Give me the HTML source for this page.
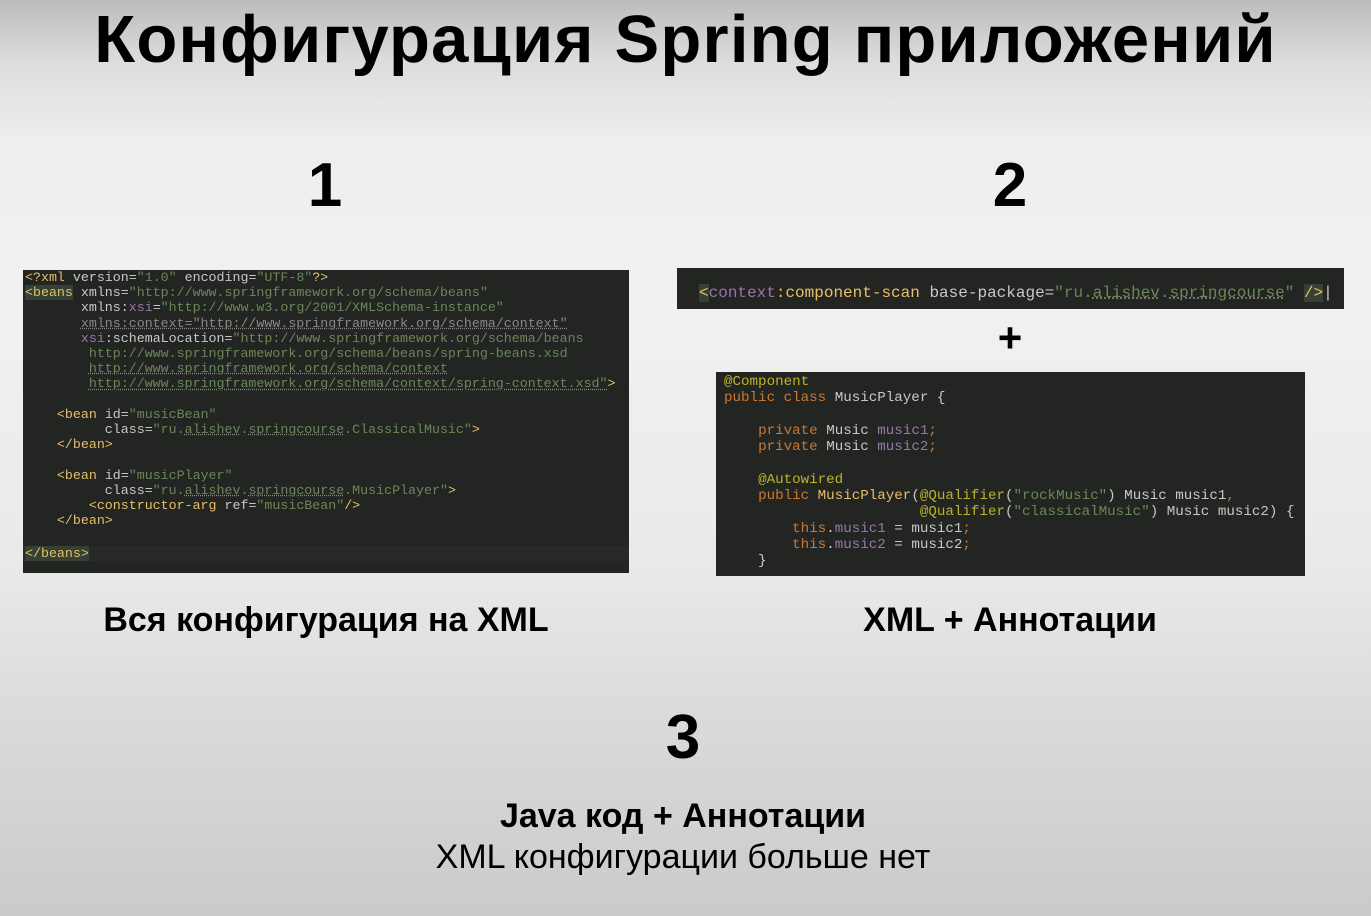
<!DOCTYPE html>
<html><head><meta charset="utf-8"><style>
body{margin:0;width:1371px;height:916px;overflow:hidden;position:relative;font-family:"Liberation Sans",Arial,sans-serif;
background:linear-gradient(180deg,#bcbcbc 0px,#dcdcdc 60px,#eeeeee 140px,#f1f1f1 300px,#eaeaea 560px,#dcdcdc 700px,#cacaca 916px);}
.c{position:absolute;text-align:center;color:#000;white-space:nowrap}
.b{font-weight:bold}
.code{position:absolute;background:#232523;font-family:"Liberation Mono","DejaVu Sans Mono",monospace;white-space:pre;color:#c8c8c8;overflow:hidden}
.t{color:#e8bf6a}.s{color:#6a8759}.p{color:#9876aa}.k{color:#cc7832}.a{color:#bbb529}.u{text-decoration:underline dotted #888}
</style></head><body>
<div class="c b" style="left:0;width:1371px;top:1px;font-size:67px;letter-spacing:1.2px">Конфигурация Spring приложений</div>
<div class="c b" style="left:225px;width:200px;top:150px;font-size:62px">1</div>
<div class="c b" style="left:910px;width:200px;top:150px;font-size:62px">2</div>
<div class="c b" style="left:583px;width:200px;top:702px;font-size:62px">3</div>
<div class="c b" style="left:26px;width:600px;top:601px;font-size:34px">Вся конфигурация на XML</div>
<div class="c b" style="left:710px;width:600px;top:601px;font-size:34px">XML + Аннотации</div>
<div class="c b" style="left:283px;width:800px;top:797px;font-size:34px">Java код + Аннотации</div>
<div class="c" style="left:283px;width:800px;top:838px;font-size:34px">XML конфигурации больше нет</div>

<div class="code" style="left:23px;top:270px;width:606px;height:303px;font-size:13.3px;line-height:15.2px;padding:0 0 0 2px;box-sizing:border-box"><span class="t">&lt;?xml </span>version=<span class="s">"1.0"</span> encoding=<span class="s">"UTF-8"</span><span class="t">?&gt;</span>
<span class="t" style="background:#344134">&lt;beans</span> xmlns=<span class="s">"http://www.springframework.org/schema/beans"</span>
       xmlns:<span class="p">xsi</span>=<span class="s">"http://www.w3.org/2001/XMLSchema-instance"</span>
       <span class="u" style="color:#888">xmlns:context="http://www.springframework.org/schema/context"</span>
       <span class="p">xsi</span>:schemaLocation=<span class="s">"http://www.springframework.org/schema/beans</span>
        <span class="s">http://www.springframework.org/schema/beans/spring-beans.xsd</span>
        <span class="s u">http://www.springframework.org/schema/context</span>
        <span class="s u">http://www.springframework.org/schema/context/spring-context.xsd"</span><span class="t">&gt;</span>

    <span class="t">&lt;bean </span>id=<span class="s">"musicBean"</span>
          class=<span class="s">"ru.<span class="u">alishev</span>.<span class="u">springcourse</span>.ClassicalMusic"</span><span class="t">&gt;</span>
    <span class="t">&lt;/bean&gt;</span>

    <span class="t">&lt;bean </span>id=<span class="s">"musicPlayer"</span>
          class=<span class="s">"ru.<span class="u">alishev</span>.<span class="u">springcourse</span>.MusicPlayer"</span><span class="t">&gt;</span>
        <span class="t">&lt;constructor-arg </span>ref=<span class="s">"musicBean"</span><span class="t">/&gt;</span>
    <span class="t">&lt;/bean&gt;</span>

<div style="background:#282a28;margin-left:-2px;padding-left:2px;margin-top:2px"><span class="t" style="background:#344134">&lt;/beans&gt;</span></div></div>

<div class="code" style="left:677px;top:268px;width:667px;height:41px;font-size:16px;line-height:20px;padding:15px 0 0 22px;box-sizing:border-box"><span class="t" style="background:#344134">&lt;</span><span class="p">context</span><span class="t">:component-scan </span>base-package=<span class="s">"ru.<span class="u">alishev</span>.<span class="u">springcourse</span>"</span> <span class="t" style="background:#344134">/&gt;</span>|</div>

<div class="c b" style="left:960px;width:100px;top:314px;font-size:42px">+</div>

<div class="code" style="left:716px;top:372px;width:589px;height:204px;font-size:14.2px;line-height:16.3px;padding:2px 0 0 8px;box-sizing:border-box"><span class="a">@Component</span>
<span class="k">public class </span>MusicPlayer {

    <span class="k">private </span>Music <span class="p">music1</span><span class="k">;</span>
    <span class="k">private </span>Music <span class="p">music2</span><span class="k">;</span>

    <span class="a">@Autowired</span>
    <span class="k">public </span><span class="t">MusicPlayer</span>(<span class="a">@Qualifier</span>(<span class="s">"rockMusic"</span>) Music music1<span class="k">,</span>
                       <span class="a">@Qualifier</span>(<span class="s">"classicalMusic"</span>) Music music2) {
        <span class="k">this</span>.<span class="p">music1</span> = music1<span class="k">;</span>
        <span class="k">this</span>.<span class="p">music2</span> = music2<span class="k">;</span>
    }</div>
</body></html>
